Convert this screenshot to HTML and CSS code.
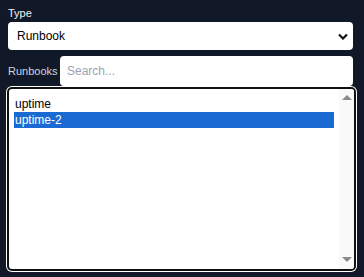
FILE: index.html
```html
<!DOCTYPE html>
<html>
<head>
<meta charset="utf-8">
<link rel="stylesheet" href="styles.css">
</head>
<body>
<div class="panel">
  <label class="type-label">Type</label>
  <div class="select">
    <span class="select-value">Runbook</span>
    <svg class="chevron" width="10" height="7" viewBox="0 0 10 7"><path d="M1 1.5 L5 5.5 L9 1.5" fill="none" stroke="#111" stroke-width="2.2"/></svg>
  </div>
  <div class="search-row">
    <span class="search-label">Runbooks</span>
    <div class="search-input"><span class="placeholder">Search...</span></div>
  </div>
  <div class="listbox">
    <div class="options">
      <div class="option">uptime</div>
      <div class="option selected">uptime-2</div>
    </div>
    <div class="scrollbar">
      <span class="arrow up"></span>
      <span class="arrow down"></span>
    </div>
  </div>
</div>
</body>
</html>
```
FILE: styles.css
```css
html, body {
  margin: 0;
  padding: 0;
  background: #111827;
  width: 364px;
  height: 277px;
  overflow: hidden;
  font-family: "Liberation Sans", Arial, sans-serif;
}
.panel {
  padding: 6px 11px 0 8px;
  display: flex;
  flex-direction: column;
}
.type-label {
  color: #f3f4f6;
  font-size: 11px;
  line-height: 14px;
  height: 16px;
}
.select {
  height: 28px;
  background: #fff;
  border-radius: 4px;
  display: flex;
  align-items: center;
  justify-content: space-between;
  padding: 0 5px 0 9px;
  font-size: 12px;
  color: #000;
}
.chevron { margin-top: 1px; }
.search-row {
  display: flex;
  align-items: center;
  margin-top: 6px;
  height: 30px;
}
.search-label {
  color: #d1d5db;
  font-size: 11px;
  width: 52px;
}
.search-input {
  flex: 1;
  height: 30px;
  background: #fff;
  border-radius: 4px;
  display: flex;
  align-items: center;
  padding-left: 7px;
}
.placeholder {
  color: #9ca3af;
  font-size: 12px;
}
.listbox {
  margin: 3px -1px 0 1px;
  height: 180px;
  background: #fff;
  border-radius: 3px;
  box-shadow: 0 0 0 2px #101010, 0 0 0 3px #fff;
  display: flex;
}
.options {
  flex: 1;
  padding: 7px 5px 0 5px;
}
.option {
  height: 16px;
  line-height: 16px;
  font-size: 12px;
  color: #000;
  padding-left: 1px;
}
.option.selected {
  background: #1b6ad3;
  color: #fff;
}
.scrollbar {
  width: 15px;
  background: #f9f9f9;
  display: flex;
  flex-direction: column;
  justify-content: space-between;
  align-items: center;
  padding: 6px 0 7px;
  border-radius: 0 3px 3px 0;
}
.arrow {
  width: 0;
  height: 0;
  border-left: 5px solid transparent;
  border-right: 5px solid transparent;
}
.arrow.up { border-bottom: 5px solid #8a8a8a; }
.arrow.down { border-top: 5px solid #8a8a8a; }
```
